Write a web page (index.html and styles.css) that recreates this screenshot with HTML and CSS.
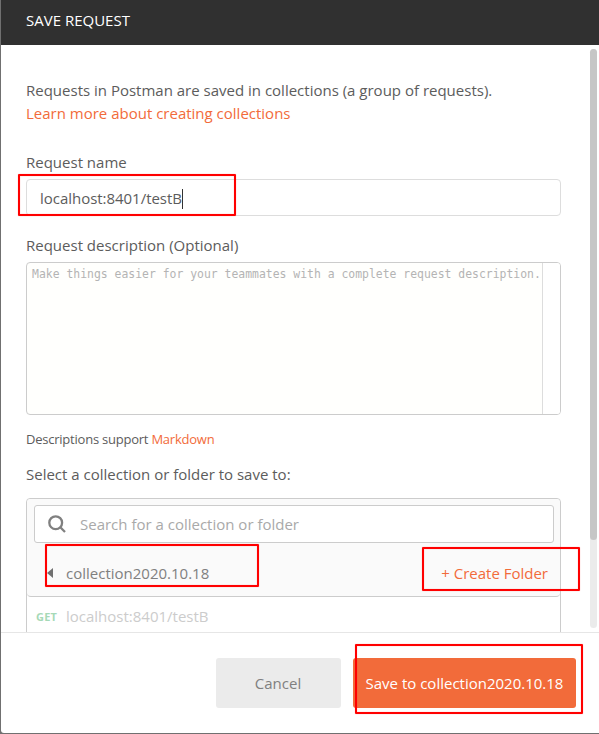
FILE: index.html
```html
<!DOCTYPE html>
<html lang="en">
<head>
<meta charset="utf-8">
<title>Save Request</title>
<link rel="stylesheet" href="styles.css">
</head>
<body>
<div class="modal">
  <header class="modal-header">SAVE REQUEST</header>
  <main class="modal-body">
    <div class="content">
      <p class="intro">Requests in Postman are saved in collections (a group of requests).<br><a class="link">Learn more about creating collections</a></p>
      <label class="label name-label">Request name</label>
      <div class="name-input"><span>localhost:8401/testB</span><i class="caret"></i></div>
      <label class="label description-label">Request description (Optional)</label>
      <div class="description"><div class="placeholder">Make things easier for your teammates with a complete request description.</div><div class="gutter"></div></div>
      <p class="support">Descriptions support <a class="link">Markdown</a></p>
      <p class="label select-label">Select a collection or folder to save to:</p>
      <section class="picker">
        <div class="picker-header">
          <div class="search">
            <svg class="search-icon" viewBox="0 0 18 18"><circle cx="7.7" cy="7.7" r="6.4"/><path d="M12.3 12.3 17 17"/></svg>
            <span>Search for a collection or folder</span>
          </div>
          <div class="collection-row"><i class="arrow"></i><span class="collection-name">collection2020.10.18</span><a class="link create">+ Create Folder</a></div>
        </div>
        <div class="request-row"><span class="method">GET</span><span>localhost:8401/testB</span></div>
      </section>
    </div>
    <div class="scroll-track"><div class="scroll-thumb"></div></div>
  </main>
  <footer class="modal-footer">
    <button class="button cancel">Cancel</button>
    <button class="button save">Save to collection2020.10.18</button>
  </footer>
</div>
<i class="mark mark-name"></i>
<i class="mark mark-collection"></i>
<i class="mark mark-create"></i>
<i class="mark mark-save"></i>
</body>
</html>
```
FILE: styles.css
```css
* { box-sizing: border-box; }
body {
  margin: 0;
  width: 599px;
  height: 734px;
  overflow: hidden;
  position: relative;
  background: #707070;
  color: #5c5c5c;
  font: 15px/23px "Open Sans", sans-serif;
}
p { margin: 0; }
.link { color: #f26b3a; }
.modal {
  display: flex;
  flex-direction: column;
  height: 733px;
  margin-left: 1px;
  background: #fff;
  border-radius: 0 0 0 3px;
}
.modal-header {
  flex: none;
  height: 45px;
  padding: 9px 25px;
  background: #303030;
  color: #fff;
}
.modal-body {
  display: flex;
  justify-content: space-between;
  height: 587px;
  overflow: hidden;
}
.content { width: 535px; margin-left: 25px; padding-top: 34px; }
.label { display: block; height: 23px; }
.name-label { margin-top: 26px; }
.name-input {
  display: flex;
  align-items: center;
  height: 37px;
  margin-top: 5px;
  padding: 2px 0 0 13px;
  border: 1px solid #ddd;
  border-radius: 4px;
  letter-spacing: -.03px;
}
.caret { width: 1px; height: 20px; background: #333; }
.description-label { margin-top: 18px; }
.description {
  display: flex;
  justify-content: space-between;
  height: 153px;
  margin-top: 5px;
  border: 1px solid #ccc;
  border-radius: 4px;
  background: #fffffd;
}
.placeholder {
  padding-left: 5px;
  color: #b4b4b4;
  font: 11.43px/23px "DejaVu Sans Mono", monospace;
  white-space: nowrap;
}
.gutter { flex: none; width: 18px; border-left: 1px solid #ddd; background: #fff; border-radius: 0 3px 3px 0; }
.support { margin-top: 13px; font-size: 13px; letter-spacing: -.23px; }
.select-label { margin-top: 12px; }
.picker {
  height: 180px;
  margin-top: 12px;
  border: 1px solid #ccc;
  border-radius: 4px;
  background: #fff;
}
.picker-header {
  height: 98px;
  padding: 6px 6px 0 7px;
  background: #fafafa;
  border-bottom: 1px solid #ccc;
  border-radius: 4px;
}
.search {
  display: flex;
  align-items: center;
  height: 38px;
  padding-left: 13px;
  border: 1px solid #ccc;
  border-radius: 3px;
  background: #fff;
  color: #a9a9a9;
}
.search-icon {
  width: 18px;
  height: 18px;
  margin-right: 14px;
  fill: none;
  stroke: #808080;
  stroke-width: 2.3;
}
.collection-row { display: flex; align-items: center; height: 60px; padding-left: 13px; }
.arrow {
  border: 5px solid transparent;
  border-left: 0;
  border-right: 6px solid #707070;
}
.collection-name { margin-left: 13px; color: #808080; }
.create { margin-left: auto; margin-right: 6px; }
.request-row { display: flex; align-items: center; height: 38px; padding-left: 9px; color: #ccc; }
.method { width: 30px; color: #a6d9b7; font-size: 11px; font-weight: 700; letter-spacing: .2px; }
.scroll-track {
  width: 7px;
  height: 579px;
  margin: 4px 2px 0 0;
  border-radius: 4px;
  background: #ebebeb;
}
.scroll-thumb { height: 491px; border-radius: 4px; background: #c6c6c6; }
.modal-footer {
  display: flex;
  justify-content: flex-end;
  gap: 12px;
  height: 101px;
  padding: 25px 23px 0 0;
  border-top: 1px solid #e6e6e6;
}
.button {
  height: 50px;
  padding: 0;
  border: 0;
  border-radius: 3px;
  font: 15px/23px "Open Sans", sans-serif;
}
.cancel { width: 125px; padding-right: 1px; background: #ebebeb; color: #808080; }
.save { width: 223px; background: #f26b3a; color: #fff; }
.mark {
  position: absolute;
  border: 2px solid #f00;
  border-radius: 1px;
  box-shadow: 0 0 1px rgba(255, 0, 0, .5), inset 0 0 1px rgba(255, 0, 0, .5);
}
.mark-name { left: 18px; top: 174px; width: 218px; height: 42px; }
.mark-collection { left: 45px; top: 544px; width: 214px; height: 43px; }
.mark-create { left: 422px; top: 547px; width: 158px; height: 44px; }
.mark-save { left: 355px; top: 644px; width: 228px; height: 70px; }
```
